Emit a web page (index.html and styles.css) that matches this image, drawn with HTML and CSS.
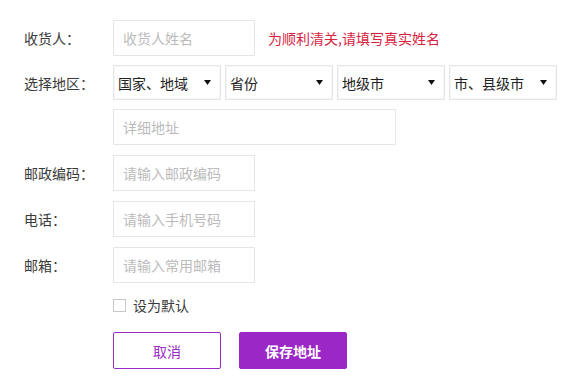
FILE: index.html
```html
<!DOCTYPE html>
<html lang="zh-CN">
<head>
<meta charset="utf-8">
<title>收货地址</title>
<link rel="stylesheet" href="styles.css">
</head>
<body>
<form class="addr-form">
  <div class="row row-name">
    <label class="label">收货人<span class="colon">：</span></label>
    <input class="field field-short" type="text" placeholder="收货人姓名">
    <span class="tip">为顺利清关,请填写真实姓名</span>
  </div>
  <div class="row row-region">
    <label class="label">选择地区<span class="colon">：</span></label>
    <div class="selects">
      <div class="select"><span>国家、地域</span><svg class="arrow" width="7" height="5" viewBox="0 0 7 5"><path d="M0 0H7L3.5 5Z" fill="#111"/></svg></div>
      <div class="select"><span>省份</span><svg class="arrow" width="7" height="5" viewBox="0 0 7 5"><path d="M0 0H7L3.5 5Z" fill="#111"/></svg></div>
      <div class="select"><span>地级市</span><svg class="arrow" width="7" height="5" viewBox="0 0 7 5"><path d="M0 0H7L3.5 5Z" fill="#111"/></svg></div>
      <div class="select"><span>市、县级市</span><svg class="arrow" width="7" height="5" viewBox="0 0 7 5"><path d="M0 0H7L3.5 5Z" fill="#111"/></svg></div>
    </div>
  </div>
  <div class="row">
    <span class="label"></span>
    <input class="field field-long" type="text" placeholder="详细地址">
  </div>
  <div class="row">
    <label class="label">邮政编码<span class="colon">：</span></label>
    <input class="field field-short" type="text" placeholder="请输入邮政编码">
  </div>
  <div class="row">
    <label class="label">电话<span class="colon">：</span></label>
    <input class="field field-short" type="text" placeholder="请输入手机号码">
  </div>
  <div class="row">
    <label class="label">邮箱<span class="colon">：</span></label>
    <input class="field field-short" type="text" placeholder="请输入常用邮箱">
  </div>
  <div class="row row-check">
    <span class="label"></span>
    <label class="check"><span class="box"></span><span>设为默认</span></label>
  </div>
  <div class="row row-btns">
    <span class="label"></span>
    <button type="button" class="btn btn-cancel">取消</button>
    <button type="button" class="btn btn-save">保存地址</button>
  </div>
</form>
</body>
</html>
```

FILE: styles.css
```css
* { box-sizing: border-box; }
html, body { margin: 0; padding: 0; background: #fff; }
body {
  font-family: "Noto Sans CJK SC", "Noto Sans", "Liberation Sans", sans-serif;
  font-size: 14px;
  color: #333;
}
.addr-form {
  padding: 20px 0 0 24px;
}
.row {
  display: flex;
  align-items: center;
  margin-bottom: 10px;
}
.row-name, .row-region { margin-bottom: 9px; }
.label {
  width: 89px;
  flex: none;
  font-size: 14px;
  line-height: 20px;
  color: #3a3a3a;
}
.colon {
  font-family: "Noto Sans CJK TC", "Noto Sans CJK SC", sans-serif;
}
.field {
  height: 36px;
  border: 1px solid #e6e6e6;
  padding: 0 9px;
  font-family: inherit;
  font-size: 14px;
  color: #333;
  outline: none;
  background: #fff;
}
.field::placeholder { color: #bbb; }
.field-short { width: 142px; }
.field-long { width: 283px; }
.tip {
  margin-left: 13px;
  color: #d8233f;
  font-size: 14px;
  line-height: 20px;
}
.selects {
  display: flex;
  gap: 4px;
}
.select {
  width: 108px;
  height: 35px;
  border: 1px solid #e6e6e6;
  box-shadow: inset 0 0 0 1px #f6f6f6;
  display: flex;
  align-items: center;
  justify-content: space-between;
  padding: 0 9px 0 4px;
  font-size: 14px;
  color: #222;
}
.arrow { display: block; }
.row-check {
  margin-top: 15px;
  margin-bottom: 0;
  height: 14px;
}
.check {
  display: flex;
  align-items: center;
  gap: 7px;
  line-height: 20px;
  color: #3a3a3a;
}
.box {
  width: 13px;
  height: 13px;
  border: 1px solid #c8c8c8;
  background: #fff;
}
.row-btns {
  margin-top: 20px;
}
.btn {
  width: 108px;
  height: 37px;
  border-radius: 2px;
  font-family: inherit;
  font-size: 14px;
  cursor: pointer;
}
.btn-cancel {
  border: 1px solid #9a2bc6;
  background: #fff;
  color: #9a2bc6;
  margin-right: 18px;
}
.btn-save {
  border: 1px solid #9b27c7;
  background: #9b27c7;
  color: #fff;
  font-weight: bold;
}
```
